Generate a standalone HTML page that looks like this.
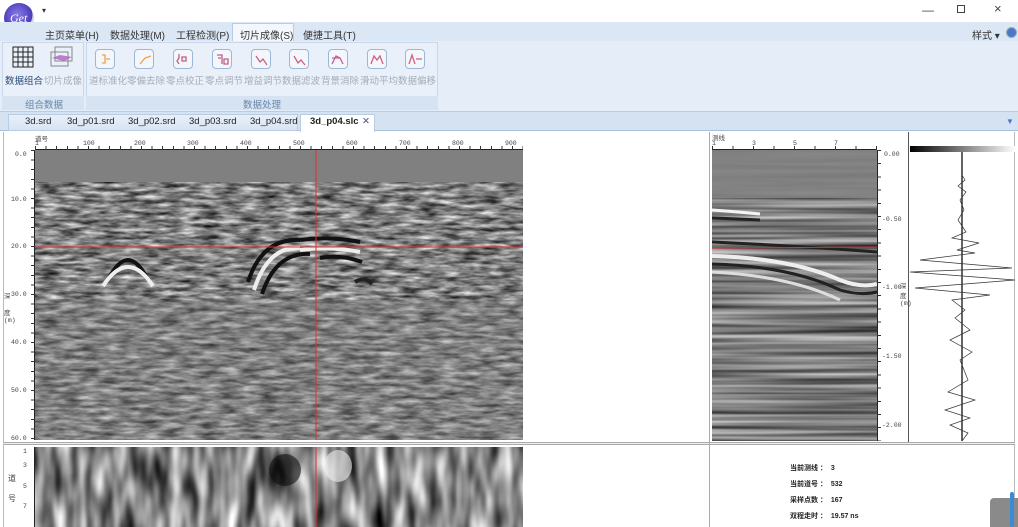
<!DOCTYPE html>
<html><head><meta charset="utf-8"><style>
*{margin:0;padding:0;box-sizing:border-box}
body{width:1018px;height:527px;overflow:hidden;background:#fff;font-family:"Liberation Sans","Noto Sans CJK SC",sans-serif;position:relative;font-size:9px;color:#333}
.a{position:absolute}
.menu span{position:absolute;top:27px;font-size:10px;color:#333}
.rb{position:absolute;top:49px;width:20px;height:20px;border:1.5px solid #9bb8d8;border-radius:4px;background:#f3f7fc}
.rl{position:absolute;top:73px;font-size:9.5px;color:#a4acb8}
.tab{position:absolute;top:116px;font-size:9.5px;color:#222}
.mono{font-family:"Liberation Mono","Noto Sans CJK SC",monospace;font-size:6.5px;color:#444}
.info{position:absolute;left:790px;font-size:7px;font-weight:bold;color:#222}
filter{color-interpolation-filters:sRGB}
</style></head><body>
<div class="a" style="left:4px;top:3px;width:30px;height:30px;border-radius:50%;background:radial-gradient(circle at 45% 40%,#8a7ce8,#4a3bb8 60%,#c8d0e8 62%,#e8ecf5);"></div>
<div class="a" style="left:10px;top:11px;color:#fff;font-style:italic;font-family:'Liberation Serif',serif;font-size:12px">Get</div>
<div class="a" style="left:42px;top:6px;font-size:8px">▾</div>
<div class="a" style="left:922px;top:3px;font-size:12px;color:#444">—</div>
<div class="a" style="left:957px;top:5px;width:8px;height:8px;border:1px solid #444"></div>
<div class="a" style="left:994px;top:1px;font-size:13px;color:#444">×</div>
<div class="a menu" style="left:0;top:22px;width:1018px;height:19px;background:#dbe7f4"></div>
<div class="a" style="left:232px;top:23px;width:62px;height:19px;background:#f4f8fd;border:1px solid #b8cce4;border-bottom:none"></div>
<div class="menu"><span style="left:45px">主页菜单(H)</span><span style="left:110px">数据处理(M)</span><span style="left:176px">工程检测(P)</span><span style="left:240px">切片成像(S)</span><span style="left:303px">便捷工具(T)</span></div>
<div class="a" style="left:972px;top:27px;font-size:10px;color:#333">样式 ▾</div>
<div class="a" style="left:1006px;top:27px;width:11px;height:11px;border-radius:50%;background:#4a78c8;border:1px solid #9ab"></div>
<div class="a" style="left:0;top:41px;width:1018px;height:71px;background:#e4edf8;border-bottom:1px solid #b8cce4"></div>
<div class="a" style="left:2px;top:42px;width:82px;height:68px;border:1px solid #c8d8ea;background:#e9f0f9"></div>
<div class="a" style="left:86px;top:42px;width:352px;height:68px;border:1px solid #c8d8ea;background:#e9f0f9"></div>
<div class="a" style="left:2px;top:96px;width:82px;height:14px;background:#d6e3f2"></div>
<div class="a" style="left:86px;top:96px;width:352px;height:14px;background:#d6e3f2"></div>
<div class="a" style="left:25px;top:97px;font-size:9.5px;color:#6a86a8">组合数据</div>
<div class="a" style="left:243px;top:97px;font-size:9.5px;color:#6a86a8">数据处理</div>
<svg class="a" style="left:12px;top:46px" width="22" height="22"><g stroke="#222" stroke-width="1" fill="none"><path d="M1 1h20v20H1zM1 6h20M1 11h20M1 16h20M6 1v20M11 1v20M16 1v20"/></g></svg>
<svg class="a" style="left:50px;top:46px" width="24" height="22"><rect x="5" y="1" width="17" height="14" fill="none" stroke="#888"/><rect x="1" y="6" width="17" height="14" fill="none" stroke="#888"/><path d="M2 12l8-3 12 2-8 4z" fill="#b060c0" opacity=".8"/></svg>
<div class="a" style="left:5px;top:73px;font-size:9.5px;color:#2a4a78">数据组合</div>
<div class="rl" style="left:44px">切片成像</div>
<div class="rb" style="left:95px"></div><div class="rb" style="left:134px"></div><div class="rb" style="left:173px"></div><div class="rb" style="left:212px"></div><div class="rb" style="left:251px"></div><div class="rb" style="left:289px"></div><div class="rb" style="left:328px"></div><div class="rb" style="left:367px"></div><div class="rb" style="left:405px"></div>
<svg class="a" style="left:95px;top:49px" width="340" height="20"><g fill="none" stroke-width="1.3">
<path d="M7 6h3v8h-3M11 10h4" stroke="#f0a050"/>
<path d="M45 15l5-6 6-2" stroke="#f0a040"/>
<path d="M84 5v4l-2 3 2 3M87 8h4v4h-4z" stroke="#c06080"/>
<path d="M122 6h5v9M123 9h3M129 10h4v5h-4z" stroke="#c06080"/>
<path d="M161 7l4 6 3-3 4 6" stroke="#d06080"/>
<path d="M199 7l4 7 3-3 4 5" stroke="#d06080"/>
<path d="M237 15l4-8 4 2 3 6M237 9h8" stroke="#c06090"/>
<path d="M276 15l3-8 3 4 3-4 3 8" stroke="#d06080"/>
<path d="M314 15l3-9 3 9M321 10h6" stroke="#d06080"/>
</g></svg>
<div class="rl" style="left:89px">道标准化</div><div class="rl" style="left:127px">零偏去除</div><div class="rl" style="left:166px">零点校正</div><div class="rl" style="left:205px">零点调节</div><div class="rl" style="left:244px">增益调节</div><div class="rl" style="left:282px">数据滤波</div><div class="rl" style="left:321px">背景消除</div><div class="rl" style="left:360px">滑动平均</div><div class="rl" style="left:398px">数据偏移</div>
<div class="a" style="left:0;top:112px;width:1018px;height:19px;background:#d4e2f2;border-bottom:1px solid #a8c0dc"></div>
<div class="a" style="left:8px;top:114px;width:290px;height:17px;background:linear-gradient(#e8f0fa,#d8e4f2);border:1px solid #b8cce4"></div>
<div class="a" style="left:300px;top:114px;width:75px;height:18px;background:#fff;border:1px solid #b8cce4;border-bottom:none"></div>
<div class="tab" style="left:25px">3d.srd</div><div class="tab" style="left:67px">3d_p01.srd</div><div class="tab" style="left:128px">3d_p02.srd</div><div class="tab" style="left:189px">3d_p03.srd</div><div class="tab" style="left:250px">3d_p04.srd</div>
<div class="tab" style="left:310px;font-weight:bold">3d_p04.slc</div><div class="tab" style="left:362px;color:#557">✕</div>
<div class="a" style="left:1006px;top:117px;font-size:8px;color:#4a78c8">▼</div>
<div class="a" style="left:3px;top:132px;width:1012px;height:395px;border-left:1px solid #bbb;border-right:1px solid #bbb"></div>
<div class="a" style="left:3px;top:442px;width:1012px;height:3px;border-top:1px solid #aaa;border-bottom:1px solid #aaa;background:#eee"></div>
<div class="a" style="left:709px;top:132px;width:1px;height:395px;background:#aaa"></div>
<div class="a" style="left:908px;top:132px;width:1px;height:310px;background:#555"></div>
<svg width="1018" height="527" class="a" style="left:0;top:0">
<defs>
<filter id="n1" x="0" y="0" width="100%" height="100%" color-interpolation-filters="sRGB"><feTurbulence type="fractalNoise" baseFrequency="0.05 0.25" numOctaves="3" seed="3"/><feColorMatrix type="matrix" values="1.1 0 0 0 -0.05 1.1 0 0 0 -0.05 1.1 0 0 0 -0.05 0 0 0 0 1"/><feComposite in2="SourceGraphic" operator="in"/></filter>
<filter id="n2" x="0" y="0" width="100%" height="100%" color-interpolation-filters="sRGB"><feTurbulence type="fractalNoise" baseFrequency="0.004 0.2" numOctaves="2" seed="7"/><feColorMatrix type="matrix" values="1 0 0 0 0 1 0 0 0 0 1 0 0 0 0 0 0 0 0 1"/></filter>
<filter id="n3" x="0" y="0" width="100%" height="100%" color-interpolation-filters="sRGB"><feTurbulence type="fractalNoise" baseFrequency="0.07 0.02" numOctaves="2" seed="5"/><feColorMatrix type="matrix" values="1.5 0 0 0 -0.23 1.5 0 0 0 -0.23 1.5 0 0 0 -0.23 0 0 0 0 1"/></filter>
<linearGradient id="g"><stop offset="0" stop-color="#000"/><stop offset="1" stop-color="#fff"/></linearGradient>
</defs>
<rect x="35" y="150" width="488" height="290" fill="#888" filter="url(#n1)"/>
<rect x="35" y="150" width="488" height="32" fill="#808080"/>
<rect x="35" y="300" width="488" height="140" fill="#808080" opacity=".35"/>
<g fill="none" stroke-width="4">
<path d="M108 280 Q128 240 148 280" stroke="#111"/><path d="M103 286 Q128 248 153 286" stroke="#eee"/>
<path d="M248 282 Q262 238 300 240" stroke="#111"/><path d="M254 290 Q268 246 300 248" stroke="#eee"/>
<path d="M262 294 Q276 252 310 254" stroke="#111"/><path d="M300 240 Q330 236 360 242" stroke="#111"/>
<path d="M300 250 Q330 246 360 252" stroke="#eee"/><path d="M320 258 Q340 254 362 262" stroke="#111"/>
<path d="M355 282 Q365 276 372 284" stroke="#222"/>
</g>
<line x1="316" y1="150" x2="316" y2="440" stroke="#e03030"/>
<line x1="35" y1="247" x2="523" y2="247" stroke="#e03030"/>
<line x1="35" y1="149.5" x2="523" y2="149.5" stroke="#222"/>
<line x1="34.5" y1="150" x2="34.5" y2="440" stroke="#222"/>
<rect x="35" y="447" width="488" height="80" fill="#888" filter="url(#n3)"/>
<ellipse cx="285" cy="470" rx="16" ry="16" fill="#111" opacity=".6"/><ellipse cx="338" cy="466" rx="14" ry="16" fill="#eee" opacity=".6"/>
<line x1="316" y1="447" x2="316" y2="527" stroke="#e03030"/>
<line x1="34.5" y1="447" x2="34.5" y2="527" stroke="#222"/>
<rect x="712" y="150" width="165" height="291" fill="#888" filter="url(#n2)"/>
<rect x="712" y="150" width="165" height="48" fill="#828282" opacity=".9"/>
<g fill="none" stroke-width="3">
<path d="M712 210 Q740 212 760 214" stroke="#f4f4f4"/><path d="M712 218 Q740 219 760 220" stroke="#222"/>
<path d="M712 242 Q800 246 877 252" stroke="#222"/><path d="M712 256 Q790 258 840 280 Q860 288 877 284" stroke="#eee" stroke-width="4"/>
<path d="M712 264 Q790 266 840 290 Q860 296 877 292" stroke="#222"/><path d="M712 272 Q790 276 840 300" stroke="#ddd"/>
</g>
<line x1="712" y1="248" x2="877" y2="247" stroke="#e03030"/>
<line x1="712" y1="149.5" x2="877" y2="149.5" stroke="#222"/>
<line x1="877.5" y1="150" x2="877.5" y2="441" stroke="#222"/>
<rect x="910" y="146" width="105" height="6" fill="url(#g)"/>
<line x1="962" y1="152" x2="962" y2="441" stroke="#111" stroke-width="1.3"/>
<polyline fill="none" stroke="#333" stroke-width=".7" points="962,175 965,180 958,186 966,192 960,200 964,210 958,220 966,232 952,238 979,243 957,250 975,253 920,260 1012,268 910,272 1015,280 915,288 990,295 952,300 965,310 955,318 970,330 950,340 972,352 960,360 968,380 948,392 975,400 945,410 970,418 950,425 968,433 962,441"/>
</svg>
<div class="a mono" style="left:35px;top:133px">道号</div>
<div class="a mono" style="left:35px;top:140px">1</div><div class="a mono" style="left:83px;top:140px">100</div><div class="a mono" style="left:134px;top:140px">200</div><div class="a mono" style="left:187px;top:140px">300</div><div class="a mono" style="left:240px;top:140px">400</div><div class="a mono" style="left:293px;top:140px">500</div><div class="a mono" style="left:346px;top:140px">600</div><div class="a mono" style="left:399px;top:140px">700</div><div class="a mono" style="left:452px;top:140px">800</div><div class="a mono" style="left:505px;top:140px">900</div>
<div class="a" style="left:35px;top:146px;width:488px;height:4px;background:repeating-linear-gradient(90deg,#333 0 1px,transparent 1px 10.6px)"></div>
<div class="a" style="left:31px;top:150px;width:4px;height:290px;background:repeating-linear-gradient(#333 0 1px,transparent 1px 9.6px)"></div>
<div class="a mono" style="left:15px;top:151px">0.0</div><div class="a mono" style="left:11px;top:196px">10.0</div><div class="a mono" style="left:11px;top:243px">20.0</div><div class="a mono" style="left:11px;top:291px">30.0</div><div class="a mono" style="left:11px;top:339px">40.0</div><div class="a mono" style="left:11px;top:387px">50.0</div><div class="a mono" style="left:11px;top:435px">60.0</div>
<div class="a mono" style="left:4px;top:290px">深<br><br>度<br>(m)</div>
<div class="a mono" style="left:23px;top:448px">1</div><div class="a mono" style="left:23px;top:462px">3</div><div class="a mono" style="left:23px;top:483px">5</div><div class="a mono" style="left:23px;top:503px">7</div>
<div class="a mono" style="left:8px;top:473px;font-size:8px">道<br><br>号</div>
<div class="a mono" style="left:712px;top:132px">测线</div>
<div class="a mono" style="left:712px;top:140px">1</div><div class="a mono" style="left:752px;top:140px">3</div><div class="a mono" style="left:793px;top:140px">5</div><div class="a mono" style="left:834px;top:140px">7</div>
<div class="a" style="left:712px;top:146px;width:165px;height:4px;background:repeating-linear-gradient(90deg,#333 0 1px,transparent 1px 20.5px)"></div>
<div class="a" style="left:877px;top:150px;width:4px;height:291px;background:repeating-linear-gradient(#333 0 1px,transparent 1px 13.2px)"></div>
<div class="a mono" style="left:884px;top:151px">0.00</div><div class="a mono" style="left:882px;top:216px">-0.50</div><div class="a mono" style="left:882px;top:284px">-1.00</div><div class="a mono" style="left:882px;top:353px">-1.50</div><div class="a mono" style="left:882px;top:422px">-2.00</div>
<div class="a mono" style="left:900px;top:280px">深<br>度<br>(m)</div>
<div class="info" style="top:463px">当前测线 ： &nbsp;3</div>
<div class="info" style="top:479px">当前道号 ： &nbsp;532</div>
<div class="info" style="top:495px">采样点数 ： &nbsp;167</div>
<div class="info" style="top:511px">双程走时 ： &nbsp;19.57 ns</div>
<div class="a" style="left:990px;top:498px;width:28px;height:29px;background:#8a8a8a;border-radius:4px 0 0 0"></div>
<div class="a" style="left:1010px;top:492px;width:4px;height:35px;background:#3a8ad8;border-radius:2px"></div>
</body></html>
